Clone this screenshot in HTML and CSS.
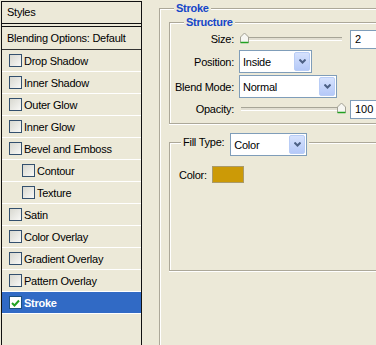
FILE: index.html
```html
<!DOCTYPE html>
<html lang="en">
<head>
    <meta charset="UTF-8">
    <meta name="viewport" content="width=device-width, initial-scale=1.0">
    <title>Layer Style</title>
    <link rel="stylesheet" href="styles.css">
</head>
<body>
    <div class="dialog">
        <div class="styles-list">
            <div class="list-head">Styles</div>
            <div class="list-blend">Blending Options: Default</div>
            <ul class="effects">
                <li><span class="check"></span>Drop Shadow</li>
                <li><span class="check"></span>Inner Shadow</li>
                <li><span class="check"></span>Outer Glow</li>
                <li><span class="check"></span>Inner Glow</li>
                <li><span class="check"></span>Bevel and Emboss</li>
                <li class="sub"><span class="check"></span>Contour</li>
                <li class="sub"><span class="check"></span>Texture</li>
                <li><span class="check"></span>Satin</li>
                <li><span class="check"></span>Color Overlay</li>
                <li><span class="check"></span>Gradient Overlay</li>
                <li><span class="check"></span>Pattern Overlay</li>
                <li class="selected">
                    <span class="check checked">
                        <svg width="9" height="8" viewBox="0 0 9 8"><path d="M1 4 L3.5 6.5 L8 1.5" stroke="#21a121" stroke-width="2" fill="none"/></svg>
                    </span>Stroke
                </li>
            </ul>
        </div>

        <div class="options">
            <fieldset class="group stroke">
                <legend>Stroke</legend>

                <fieldset class="group structure">
                    <legend>Structure</legend>

                    <div class="row row-slim">
                        <label>Size:</label>
                        <div class="slider">
                            <div class="track"></div>
                            <svg class="thumb thumb-left" width="11" height="12" viewBox="0 0 11 12"><path d="M1.5 5 L5.5 1 L9.5 5 V10.5 H1.5 Z" fill="#f6f6f2" stroke="#a2a093"/><path d="M1.5 10.5 H9.5" stroke="#21a121" stroke-width="1.5"/></svg>
                        </div>
                        <input class="field" type="text" value="2">
                    </div>

                    <div class="row">
                        <label>Position:</label>
                        <div class="dropdown dd-position">
                            <span>Inside</span>
                            <span class="dd-button"><svg width="7" height="5" viewBox="0 0 7 5"><path d="M0.5 0.5 L3.5 3.5 L6.5 0.5" stroke="#4d6185" stroke-width="2" fill="none"/></svg></span>
                        </div>
                    </div>

                    <div class="row">
                        <label>Blend Mode:</label>
                        <div class="dropdown dd-blend">
                            <span>Normal</span>
                            <span class="dd-button"><svg width="7" height="5" viewBox="0 0 7 5"><path d="M0.5 0.5 L3.5 3.5 L6.5 0.5" stroke="#4d6185" stroke-width="2" fill="none"/></svg></span>
                        </div>
                    </div>

                    <div class="row row-slim">
                        <label>Opacity:</label>
                        <div class="slider">
                            <div class="track"></div>
                            <svg class="thumb thumb-right" width="11" height="12" viewBox="0 0 11 12"><path d="M1.5 5 L5.5 1 L9.5 5 V10.5 H1.5 Z" fill="#f6f6f2" stroke="#a2a093"/><path d="M1.5 10.5 H9.5" stroke="#21a121" stroke-width="1.5"/></svg>
                        </div>
                        <input class="field" type="text" value="100">
                    </div>
                </fieldset>

                <fieldset class="group fill">
                    <legend>
                        <span class="fill-label">Fill Type:</span>
                        <div class="dropdown dd-fill">
                            <span>Color</span>
                            <span class="dd-button"><svg width="7" height="5" viewBox="0 0 7 5"><path d="M0.5 0.5 L3.5 3.5 L6.5 0.5" stroke="#4d6185" stroke-width="2" fill="none"/></svg></span>
                        </div>
                    </legend>
                    <div class="color-row">
                        <span>Color:</span>
                        <span class="swatch"></span>
                    </div>
                </fieldset>
            </fieldset>
        </div>
    </div>
</body>
</html>
```

FILE: styles.css
```css
html, body {
    margin: 0;
    height: 100%;
    overflow: hidden;
}
body {
    font-family: "Liberation Sans", Arial, sans-serif;
    font-size: 11px;
    letter-spacing: -0.25px;
    color: #000;
    background-color: #ece9d8;
}
.dialog {
    display: flex;
    height: 100%;
}

/* left list of effects */
.styles-list {
    width: 139px;
    flex-shrink: 0;
    margin: 1px 0 0 1px;
    border: 1px solid #111;
    border-bottom: none;
}
.list-head {
    height: 21px;
    line-height: 21px;
    padding-left: 5px;
    border-bottom: 1px solid #111;
}
.list-blend {
    height: 22px;
    line-height: 22px;
    padding-left: 5px;
    margin-top: 2px;
    border-top: 1px solid #111;
    border-bottom: 1px solid #333;
}
.effects {
    list-style: none;
    margin: 0;
    padding: 0;
}
.effects li {
    display: flex;
    align-items: center;
    height: 21px;
    padding-left: 7px;
    border-bottom: 1px solid #fff;
}
.effects li.sub {
    padding-left: 20px;
}
.effects li.selected {
    background-color: #316ac5;
    color: #fff;
    font-weight: bold;
}
.check {
    width: 13px;
    height: 13px;
    box-sizing: border-box;
    margin-right: 2px;
    border: 1px solid #33506e;
    background: linear-gradient(135deg, #d8d8d0, #f8f8f6);
    display: flex;
    align-items: center;
    justify-content: center;
}
.check.checked {
    background: #fff;
    border-color: #1c5180;
}

/* right option groups */
.options {
    margin-left: 17px;
    width: 260px;
    flex-shrink: 0;
}
.group {
    margin: 0;
    padding: 0;
    border: 1px solid #aca899;
    box-shadow: inset 1px 1px 0 #fff, 0 1px 0 #fff;
    min-width: 0;
}
.group > legend {
    padding: 0 2px;
    line-height: 14px;
    background-color: #ece9d8;
    color: #1546c8;
    font-weight: bold;
}
.stroke {
    margin-top: 1px;
    padding-left: 9px;
    height: 400px;
}
.stroke > legend {
    margin-left: 5px;
}
.structure {
    padding-bottom: 4px;
}
.structure > legend {
    margin-left: 14px;
}
.row {
    display: flex;
    align-items: center;
    height: 25px;
}
.row-slim {
    height: 20px;
}
.row label {
    width: 64px;
    margin-right: 5px;
    text-align: right;
}
.slider {
    position: relative;
    width: 108px;
    height: 14px;
    margin-right: 3px;
}
.track {
    margin: 5px 5px 0 2px;
    height: 2px;
    border-top: 1px solid #a7a597;
    border-bottom: 1px solid #fff;
    background-color: #e2dfd2;
}
.thumb {
    position: absolute;
    top: 0;
}
.thumb-left {
    left: 0;
}
.thumb-right {
    right: 0;
}
.field {
    box-sizing: border-box;
    width: 40px;
    height: 19px;
    margin: 0;
    padding: 0 0 0 4px;
    border: 1px solid #7f9db9;
    font: inherit;
    color: #000;
    background: #fff;
}
.dropdown {
    box-sizing: border-box;
    height: 23px;
    border: 1px solid #7f9db9;
    background: #fff;
    display: flex;
    align-items: center;
    justify-content: space-between;
    padding: 1px 1px 1px 3px;
    font-weight: normal;
    color: #000;
}
.dd-button {
    box-sizing: border-box;
    width: 16px;
    align-self: stretch;
    border: 1px solid #b9cdf6;
    border-radius: 2px;
    background: linear-gradient(#d6e2fd, #b5c9f8);
    display: flex;
    align-items: center;
    justify-content: center;
}
.dd-position {
    width: 73px;
}
.dd-blend {
    width: 98px;
}
.dd-fill {
    width: 77px;
    margin-bottom: -5px;
}
.fill {
    margin-top: 9px;
    padding-bottom: 87px;
}
.fill > legend {
    display: flex;
    align-items: flex-start;
    margin-left: 11px;
    height: 18px;
    line-height: 18px;
    color: #000;
    font-weight: normal;
}
.fill-label {
    margin-right: 6px;
}
.color-row {
    display: flex;
    align-items: center;
    padding: 15px 0 0 9px;
}
.swatch {
    width: 32px;
    height: 17px;
    box-sizing: border-box;
    margin-left: 5px;
    border: 1px solid #a99a6a;
    background-color: #cc9a06;
}
```
